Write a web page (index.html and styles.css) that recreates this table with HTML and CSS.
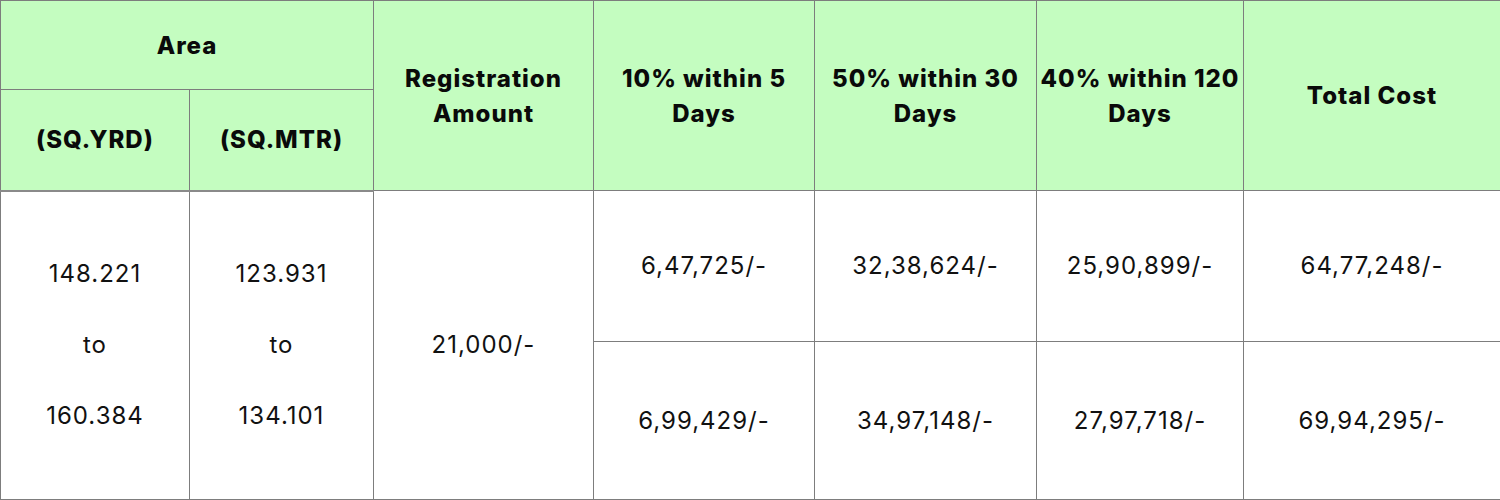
FILE: index.html
```html
<!DOCTYPE html>
<html lang="en">
<head>
<meta charset="utf-8">
<title>Price Table</title>
<link rel="stylesheet" href="styles.css">
</head>
<body>
<table class="price-table">
  <colgroup>
    <col class="c1"><col class="c2"><col class="c3"><col class="c4"><col class="c5"><col class="c6"><col class="c7">
  </colgroup>
  <thead>
    <tr class="row-top">
      <th colspan="2">Area</th>
      <th rowspan="2">Registration<br>Amount</th>
      <th rowspan="2">10% within 5<br>Days</th>
      <th rowspan="2">50% within 30<br>Days</th>
      <th rowspan="2">40% within 120<br>Days</th>
      <th rowspan="2">Total Cost</th>
    </tr>
    <tr class="row-sub">
      <th>(SQ.YRD)</th>
      <th>(SQ.MTR)</th>
    </tr>
  </thead>
  <tbody>
    <tr class="row-a">
      <td rowspan="2"><div class="range"><span>148.221</span><span>to</span><span>160.384</span></div></td>
      <td rowspan="2"><div class="range"><span>123.931</span><span>to</span><span>134.101</span></div></td>
      <td rowspan="2">21,000/-</td>
      <td>6,47,725/-</td>
      <td>32,38,624/-</td>
      <td>25,90,899/-</td>
      <td>64,77,248/-</td>
    </tr>
    <tr class="row-b">
      <td>6,99,429/-</td>
      <td>34,97,148/-</td>
      <td>27,97,718/-</td>
      <td>69,94,295/-</td>
    </tr>
  </tbody>
</table>
</body>
</html>
```
FILE: styles.css
```css
html, body {
  margin: 0;
  padding: 0;
  background: #ffffff;
}
.price-table {
  width: 1500px;
  border-collapse: collapse;
  table-layout: fixed;
  font-family: Inter, "Liberation Sans", sans-serif;
  color: #111;
}
.c1 { width: 189px; }
.c2 { width: 184px; }
.c3 { width: 220px; }
.c4 { width: 221px; }
.c5 { width: 222px; }
.c6 { width: 207px; }
.c7 { width: 257px; }
.price-table th,
.price-table td {
  border: 1px solid #7d7d7d;
  text-align: center;
  vertical-align: middle;
  padding: 0;
}
.price-table th {
  background: #c4fdc0;
  font-weight: 800;
  font-size: 24px;
  letter-spacing: 1px;
  line-height: 35px;
  color: #0a0a0a;
}
.price-table thead tr.row-sub th {
  border-bottom: 2px solid #8a8a8a;
}
.row-top { height: 89px; }
.row-sub { height: 101px; }
.row-a { height: 151px; }
.row-b { height: 158px; }
.price-table td {
  font-size: 24px;
  font-weight: 400;
  letter-spacing: 1px;
  line-height: 30px;
}
.range {
  display: flex;
  flex-direction: column;
  align-items: center;
  gap: 41px;
}
```
